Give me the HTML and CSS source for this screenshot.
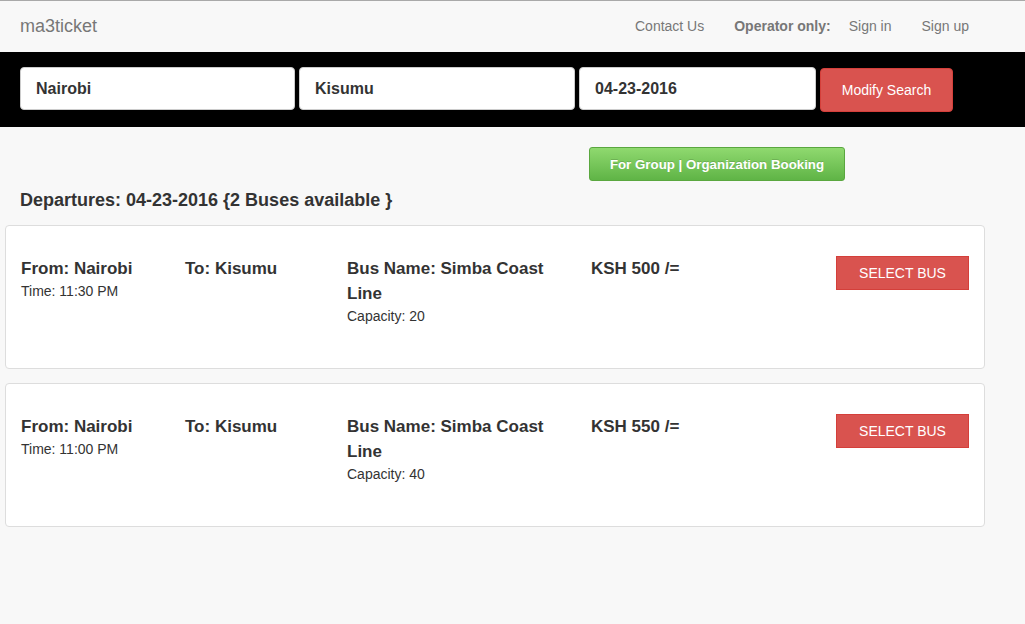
FILE: index.html
```html
<!DOCTYPE html>
<html>
<head>
<meta charset="utf-8">
<title>ma3ticket</title>
<link rel="stylesheet" href="styles.css">
</head>
<body>
<header class="navbar">
  <a class="brand" href="#">ma3ticket</a>
  <nav class="nav">
    <a class="nav-link" href="#">Contact Us</a>
    <span class="nav-label">Operator only:</span>
    <a class="nav-link" href="#">Sign in</a>
    <a class="nav-link" href="#">Sign up</a>
  </nav>
</header>

<section class="search-bar">
  <div class="field field-from">Nairobi</div>
  <div class="field field-to">Kisumu</div>
  <div class="field field-date">04-23-2016</div>
  <button class="btn-modify">Modify Search</button>
</section>

<main class="content">
  <div class="group-row">
    <button class="btn-group">For Group | Organization Booking</button>
  </div>
  <h2 class="departures">Departures: 04-23-2016 {2 Buses available }</h2>

  <div class="card">
    <div class="col col-from">
      <div class="strong">From: Nairobi</div>
      <div class="small">Time: 11:30 PM</div>
    </div>
    <div class="col col-to">
      <div class="strong">To: Kisumu</div>
    </div>
    <div class="col col-bus">
      <div class="strong">Bus Name: Simba Coast Line</div>
      <div class="small">Capacity: 20</div>
    </div>
    <div class="col col-price">
      <div class="strong">KSH 500 /=</div>
    </div>
    <div class="col col-action">
      <button class="btn-select">SELECT BUS</button>
    </div>
  </div>

  <div class="card">
    <div class="col col-from">
      <div class="strong">From: Nairobi</div>
      <div class="small">Time: 11:00 PM</div>
    </div>
    <div class="col col-to">
      <div class="strong">To: Kisumu</div>
    </div>
    <div class="col col-bus">
      <div class="strong">Bus Name: Simba Coast Line</div>
      <div class="small">Capacity: 40</div>
    </div>
    <div class="col col-price">
      <div class="strong">KSH 550 /=</div>
    </div>
    <div class="col col-action">
      <button class="btn-select">SELECT BUS</button>
    </div>
  </div>
</main>
</body>
</html>
```

FILE: styles.css
```css
* { box-sizing: border-box; }

html, body {
  margin: 0;
  padding: 0;
}

body {
  background: #f8f8f8;
  font-family: "Liberation Sans", Arial, sans-serif;
  font-size: 14px;
  color: #333;
}

.navbar {
  height: 52px;
  border-top: 1px solid #a9a9a9;
  background: #f8f8f8;
  display: flex;
  align-items: center;
  justify-content: space-between;
  padding: 0 40px 2px 20px;
}

.brand {
  font-size: 18px;
  color: #777;
  text-decoration: none;
  line-height: 20px;
}

.nav {
  display: flex;
  align-items: center;
  margin-right: 1px;
}

.nav-link {
  color: #777;
  text-decoration: none;
  padding: 0 15px;
  line-height: 20px;
}

.nav-label {
  color: #777;
  font-weight: bold;
  padding-left: 15px;
  padding-right: 3px;
  line-height: 20px;
}

.search-bar {
  background: #000;
  height: 75px;
  display: flex;
  align-items: flex-start;
  gap: 4px;
  padding: 15px 0 0 20px;
}

.field {
  height: 43px;
  background: #fff;
  border: 1px solid #ccc;
  border-radius: 4px;
  padding: 1px 15px 0 15px;
  font-size: 16px;
  font-weight: bold;
  color: #333;
  display: flex;
  align-items: center;
}

.field-from { width: 275px; }
.field-to { width: 276px; }
.field-date { width: 237px; }

.btn-modify {
  margin-top: 1px;
  width: 133px;
  height: 44px;
  background: #d9534f;
  border: 1px solid #d43f3a;
  border-radius: 4px;
  color: #fff;
  font-family: "Liberation Sans", Arial, sans-serif;
  font-size: 14px;
}

.content {
  padding: 20px 40px 0 5px;
}

.group-row {
  display: flex;
  padding-left: 584px;
}

.btn-group {
  width: 256px;
  height: 34px;
  background: linear-gradient(#8fd96f, #5fb446);
  border: 1px solid #5aa73f;
  border-radius: 3px;
  color: #fff;
  font-family: "Liberation Sans", Arial, sans-serif;
  font-size: 13.3px;
  font-weight: bold;
  text-shadow: 0 -1px 0 rgba(0, 0, 0, 0.15);
}

.departures {
  margin: 9px 0 15px 15px;
  font-size: 18px;
  line-height: 20px;
  font-weight: bold;
  color: #333;
}

.card {
  width: 980px;
  background: #fff;
  border: 1px solid #ddd;
  border-radius: 4px;
  padding: 30px 15px 42px 15px;
  margin-bottom: 14px;
  display: grid;
  grid-template-columns: 164px 162px 244px 245px 1fr;
  align-items: start;
}

.strong {
  font-size: 17px;
  font-weight: bold;
  line-height: 25px;
  color: #333;
}

.small {
  font-size: 14px;
  line-height: 20px;
  color: #333;
}

.col-bus .strong {
  padding-right: 30px;
}

.btn-select {
  width: 133px;
  height: 34px;
  background: #d9534f;
  border: 1px solid #d43f3a;
  border-radius: 0;
  color: #fff;
  font-family: "Liberation Sans", Arial, sans-serif;
  font-size: 14px;
}
```
